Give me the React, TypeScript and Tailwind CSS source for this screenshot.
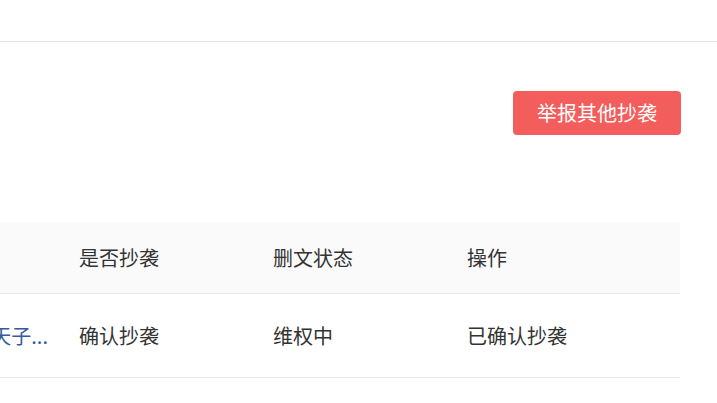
const font = { fontFamily: '"Noto Sans CJK SC", "Microsoft YaHei", sans-serif' };

const columns = ["是否抄袭", "删文状态", "操作"];

const rows = [
  { title: "一篇被转载到别处的文章天子...", copied: "确认抄袭", status: "维权中", action: "已确认抄袭" },
];

export default function App() {
  return (
    <div className="min-h-[403px] w-[717px] overflow-hidden bg-white" style={font}>
      <div className="h-[42px] border-b border-[#e6e6e6]" />

      <div className="flex justify-end pt-[49px] pr-[36px]">
        <button
          type="button"
          className="h-[44px] w-[168px] rounded-[4px] bg-[#f35d5c] text-[20px] text-white"
        >
          举报其他抄袭
        </button>
      </div>

      <div className="mt-[87px] mr-[37px]">
        <div className="flex h-[72px] items-center border-b border-[#e8e8e8] bg-[#fafafa] text-[20px] text-[#333]">
          <div className="w-[63px]" />
          {columns.map((c, i) => (
            <div key={c} className={i === 2 ? "flex-1 pl-4" : "w-[194px] pl-4"}>
              {c}
            </div>
          ))}
        </div>

        {rows.map((r) => (
          <div
            key={r.title}
            className="flex h-[84px] items-center border-b border-[#e8e8e8] text-[20px] text-[#333]"
          >
            <div className="flex w-[63px] justify-end overflow-hidden pr-[15px]">
              <span className="whitespace-nowrap text-[#36599a]">{r.title}</span>
            </div>
            <div className="w-[194px] pl-4">{r.copied}</div>
            <div className="w-[194px] pl-4">{r.status}</div>
            <div className="flex-1 pl-4">{r.action}</div>
          </div>
        ))}
      </div>
    </div>
  );
}
